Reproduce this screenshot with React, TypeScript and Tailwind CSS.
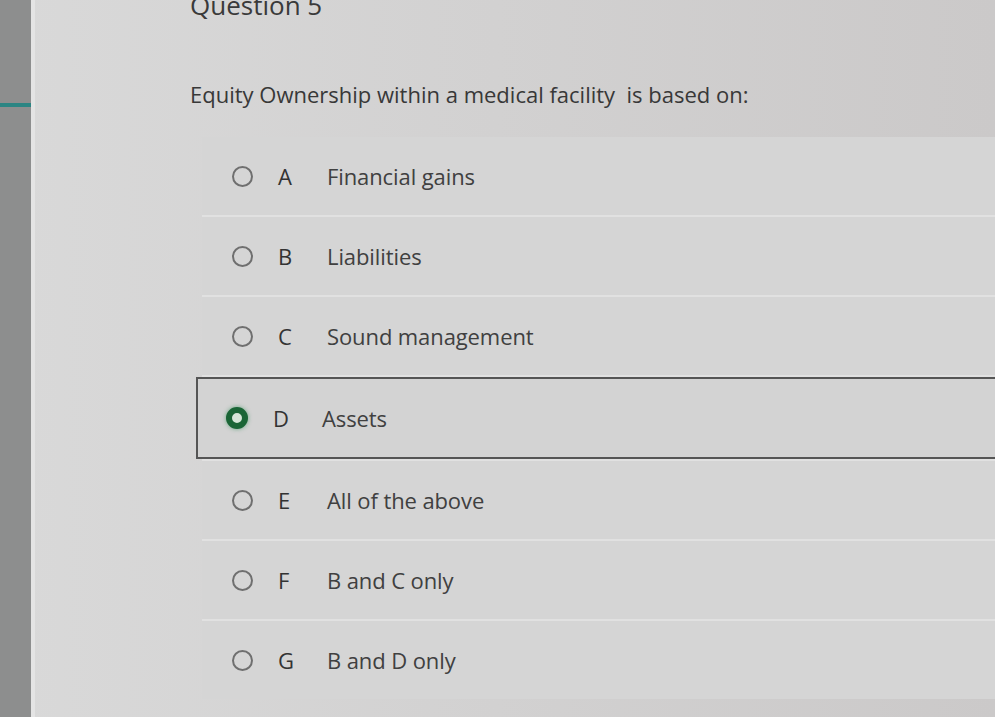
import React from "react";

type Option = { key: string; label: string };

const OPTIONS: Option[] = [
  { key: "A", label: "Financial gains" },
  { key: "B", label: "Liabilities" },
  { key: "C", label: "Sound management" },
  { key: "D", label: "Assets" },
  { key: "E", label: "All of the above" },
  { key: "F", label: "B and C only" },
  { key: "G", label: "B and D only" },
];

const SELECTED = "D";

function Radio({ checked }: { checked: boolean }) {
  if (checked) {
    return (
      <span className="size-[22px] shrink-0 rounded-full border-[6px] border-[#1a6536] bg-[#d6e6d8] shadow-[0_0_4px_rgba(40,140,80,0.6)]" />
    );
  }
  return <span className="size-[21px] shrink-0 rounded-full border-2 border-[#6f6f6f]" />;
}

function OptionRow({ option }: { option: Option }) {
  const checked = option.key === SELECTED;
  return (
    <div
      className={
        checked
          ? "-ml-[6px] flex h-[82px] items-center border-2 border-r-0 border-[#555] bg-[#d3d3d3] pl-[28px]"
          : "flex h-[78px] items-center bg-[#d5d5d5] pl-[30px]"
      }
    >
      <Radio checked={checked} />
      <span className="ml-[25px] w-[49px] text-[22px] text-[#333]">{option.key}</span>
      <span className="text-[22px] tracking-[-0.1px] text-[#404040]">{option.label}</span>
    </div>
  );
}

export default function App() {
  return (
    <div
      className="flex h-[717px] w-[995px] overflow-hidden bg-gradient-to-r from-[#d9d9d9] to-[#cbc9c9]"
      style={{ fontFamily: '"Open Sans", "Noto Sans", sans-serif' }}
    >
      <div className="w-[31px] shrink-0 bg-[#8d8e8e]">
        <div className="mt-[103px] h-[4px] bg-[#2b8583]" />
      </div>
      <div className="w-[4px] shrink-0 bg-[#e4e4e4]" />
      <div className="flex min-w-0 flex-1 flex-col pl-[155px]">
        <div className="-mt-[11px] text-[26px] leading-[32px] text-[#3a3a3a]">Question 5</div>
        <div className="mt-[58px] text-[22px] leading-[30px] text-[#383838]">
          Equity Ownership within a medical facility&nbsp; is based on:
        </div>
        <div className="ml-[12px] mt-[28px] flex flex-col gap-[2px] bg-[#e1e1e1]">
          {OPTIONS.map((o) => (
            <OptionRow key={o.key} option={o} />
          ))}
        </div>
      </div>
    </div>
  );
}
